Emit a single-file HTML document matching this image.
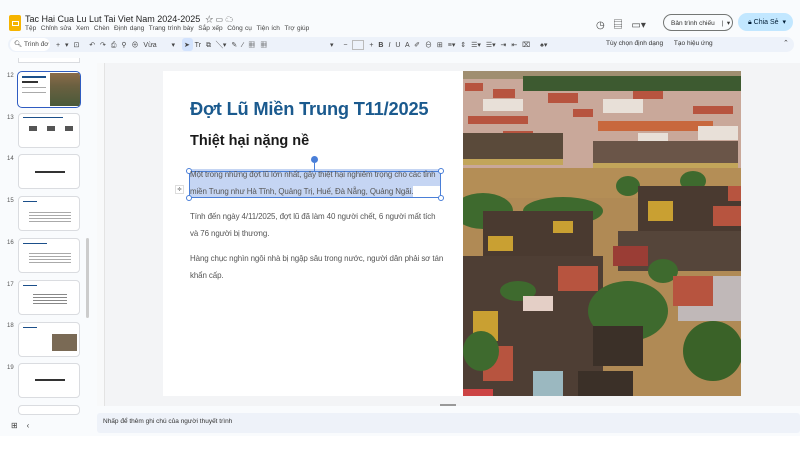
<!DOCTYPE html><html><head><meta charset="utf-8"><style>
*{margin:0;padding:0;box-sizing:border-box}
body{width:800px;height:450px;overflow:hidden;background:#f9fbfd;font-family:"Liberation Sans","Noto Sans CJK SC",sans-serif;position:relative;color:#1f1f1f}
.a{position:absolute}
.t{font-size:7px;color:#444;white-space:nowrap}
.thumb{position:absolute;left:18px;width:62px;height:35px;background:#fff;border:1px solid #dadce0;border-radius:4px}
.num{position:absolute;left:7px;font-size:6px;color:#555}
.body{font-family:"Liberation Sans",sans-serif;font-size:7.95px;color:#555;line-height:16.5px;white-space:nowrap;letter-spacing:-0.1px}
</style></head><body>
<div class="a" style="left:9px;top:15px;width:12px;height:16px;background:#f6b400;border-radius:2px"></div>
<div class="a" style="left:11.5px;top:21px;width:7px;height:5px;border:1.3px solid #fff"></div>
<div class="a" style="left:25px;top:14px;font-size:9px;color:#1f1f1f">Tac Hai Cua Lu Lut Tai Viet Nam 2024-2025 &nbsp;<span style="font-size:8px;color:#555">☆ ▭ ☁</span></div>
<div class="a t" style="left:25px;top:25px;font-size:6.5px;word-spacing:0.5px">Tệp &nbsp;Chỉnh sửa &nbsp;Xem &nbsp;Chèn &nbsp;Định dạng &nbsp;Trang trình bày &nbsp;Sắp xếp &nbsp;Công cụ &nbsp;Tiện ích &nbsp;Trợ giúp</div>
<div class="a" style="left:596px;top:16px;font-size:10px;color:#444">◷ &nbsp;&nbsp;▤ &nbsp;&nbsp;▭▾</div>
<div class="a" style="left:663px;top:14px;width:70px;height:17px;border:1px solid #747775;border-radius:9px;font-size:6.5px;color:#333;padding:4px 0 0 7px">Bản trình chiếu <span style="margin-left:5px">|&nbsp; ▾</span></div>
<div class="a" style="left:738px;top:13px;width:55px;height:18px;background:#c2e7ff;border-radius:9px;font-size:7px;color:#001d35;padding:5px 0 0 10px">🔒︎ Chia Sẻ &nbsp;▾</div>
<div class="a" style="left:8px;top:37px;width:786px;height:15px;background:#edf2fa;border-radius:8px"></div>
<div class="a" style="left:10px;top:38px;width:40px;height:13px;background:#fff;border-radius:7px;font-size:6.5px;color:#444;padding:2px 0 0 4px">🔍︎ Trình đơ</div>
<div class="a t" style="left:56px;top:40px;font-size:7px;color:#444;word-spacing:3px">+ ▾ ⊡ &nbsp;↶ ↷ ⎙ ⚲ ⊕ Vừa &nbsp;&nbsp;▾</div>
<div class="a" style="left:182px;top:38px;width:11px;height:13px;background:#d3e3fd;border-radius:3px"></div>
<div class="a t" style="left:184px;top:40px;color:#444;word-spacing:3px">➤ Tr ⧉ ╲▾ ✎ ∕ ▦ ▦</div>
<div class="a t" style="left:330px;top:40px;color:#444;word-spacing:3px">▾ &nbsp;− <span style="display:inline-block;width:12px;height:10px;border:1px solid #bbb;vertical-align:middle"></span> + <b>B</b> <i>I</i> U A ✐ ⊖ ⊞ ≡▾ ⇕ ☰▾ ☰▾ ⇥ ⇤ ⌧ &nbsp;♠▾</div>
<div class="a t" style="left:606px;top:40px;font-size:6.5px;color:#333">Tùy chọn định dạng &nbsp;&nbsp;&nbsp;&nbsp;&nbsp;Tạo hiệu ứng</div>
<div class="a t" style="left:783px;top:39px">⌃</div>
<div class="a" style="left:18px;top:58px;width:62px;height:5px;background:#fff;border:1px solid #dadce0;border-top:none"></div>
<div class="num" style="top:73px">12</div>
<div class="a" style="left:17px;top:71px;width:64px;height:37px;border:1.5px solid #2f5cc1;border-radius:5px;background:#fff;overflow:hidden">
<div class="a" style="left:4px;top:4px;width:24px;height:2px;background:#1b4f8a"></div><div class="a" style="left:4px;top:9px;width:16px;height:2px;background:#333"></div>
<div class="a" style="left:4px;top:15px;width:24px;height:1px;background:#aaa"></div><div class="a" style="left:4px;top:20px;width:24px;height:1px;background:#aaa"></div>
<div class="a" style="left:32px;top:1px;width:30px;height:33px;background:linear-gradient(#8a6b4a,#6a6040 40%,#4a5a3a)"></div></div>
<div class="num" style="top:115px">13</div><div class="thumb" style="top:113px"><div class="a" style="left:4px;top:3px;width:40px;height:1px;background:#1b4f8a"></div><div class="a" style="left:10px;top:12px;width:45px;height:5px;background:repeating-linear-gradient(90deg,#555 0 8px,transparent 8px 18px)"></div></div>
<div class="num" style="top:156px">14</div><div class="thumb" style="top:154px"><div class="a" style="left:16px;top:16px;width:30px;height:2px;background:#333"></div></div>
<div class="num" style="top:198px">15</div><div class="thumb" style="top:196px"><div class="a" style="left:4px;top:4px;width:14px;height:1px;background:#1b4f8a"></div><div class="a" style="left:10px;top:15px;width:42px;height:10px;background:repeating-linear-gradient(#aaa 0 1px,transparent 1px 3px)"></div></div>
<div class="num" style="top:240px">16</div><div class="thumb" style="top:238px"><div class="a" style="left:4px;top:4px;width:24px;height:1px;background:#1b4f8a"></div><div class="a" style="left:10px;top:14px;width:42px;height:10px;background:repeating-linear-gradient(#aaa 0 1px,transparent 1px 3px)"></div></div>
<div class="num" style="top:282px">17</div><div class="thumb" style="top:280px"><div class="a" style="left:4px;top:4px;width:14px;height:1px;background:#1b4f8a"></div><div class="a" style="left:14px;top:13px;width:34px;height:10px;background:repeating-linear-gradient(#888 0 1px,transparent 1px 3px)"></div></div>
<div class="num" style="top:323px">18</div><div class="thumb" style="top:322px"><div class="a" style="left:4px;top:4px;width:14px;height:1px;background:#1b4f8a"></div><div class="a" style="left:33px;top:11px;width:25px;height:17px;background:#7a6a55"></div></div>
<div class="num" style="top:365px">19</div><div class="thumb" style="top:363px"><div class="a" style="left:16px;top:15px;width:30px;height:2px;background:#333"></div></div>
<div class="thumb" style="top:405px;height:10px"></div>
<div class="a" style="left:86px;top:238px;width:3px;height:80px;background:#ccc;border-radius:2px"></div>
<div class="a" style="left:11px;top:421px;font-size:8px;color:#444">⊞ &nbsp;&nbsp;&nbsp;‹</div>
<div class="a" style="left:97px;top:63px;width:703px;height:343px;background:#f3f4f6"></div>
<div class="a" style="left:97px;top:63px;width:8px;height:343px;background:#f8f9fa;border-right:1px solid #e3e3e3"></div>
<div class="a" style="left:163px;top:71px;width:578px;height:325px;background:#fff"></div>
<div class="a" style="left:190px;top:98px;font-size:18.3px;font-weight:bold;color:#1b5a8e;letter-spacing:-0.2px;white-space:nowrap">Đợt Lũ Miền Trung T11/2025</div>
<div class="a" style="left:190px;top:133px;font-size:14.5px;font-weight:bold;color:#1a1a1a">Thiệt hại nặng nề</div>
<div class="a" style="left:189px;top:169px;width:252px;height:17px;background:#c5d5f3"></div>
<div class="a" style="left:189px;top:186px;width:224px;height:12px;background:#c5d5f3"></div>
<div class="a" style="left:189px;top:171px;width:252px;height:27px;border:1px solid #4a7fd8"></div>
<div class="a" style="left:314px;top:163px;width:1px;height:8px;background:#4a7fd8"></div>
<div class="a" style="left:311px;top:156px;width:7px;height:7px;border-radius:50%;background:#4a7fd8"></div>
<div class="a" style="left:186px;top:168px;width:6px;height:6px;border-radius:50%;background:#fff;border:1px solid #4a7fd8"></div>
<div class="a" style="left:438px;top:168px;width:6px;height:6px;border-radius:50%;background:#fff;border:1px solid #4a7fd8"></div>
<div class="a" style="left:186px;top:195px;width:6px;height:6px;border-radius:50%;background:#fff;border:1px solid #4a7fd8"></div>
<div class="a" style="left:438px;top:195px;width:6px;height:6px;border-radius:50%;background:#fff;border:1px solid #4a7fd8"></div>
<div class="a" style="left:175px;top:185px;width:9px;height:9px;background:#fff;border:1px solid #ddd;font-size:6px;text-align:center;color:#666">≑</div>
<div class="a body" style="left:190px;top:167px">Một trong những đợt lũ lớn nhất, gây thiệt hại nghiêm trọng cho các tỉnh<br>miền Trung như Hà Tĩnh, Quảng Trị, Huế, Đà Nẵng, Quảng Ngãi.</div>
<div class="a body" style="left:190px;top:209px">Tính đến ngày 4/11/2025, đợt lũ đã làm 40 người chết, 6 người mất tích<br>và 76 người bị thương.</div>
<div class="a body" style="left:190px;top:251px">Hàng chục nghìn ngôi nhà bị ngập sâu trong nước, người dân phải sơ tán<br>khẩn cấp.</div>
<svg class="a" style="left:463px;top:71px" width="278" height="325" viewBox="0 0 278 325">
<rect width="278" height="325" fill="#b08a55"/>
<rect width="278" height="8" fill="#a08e70"/>
<rect x="0" y="8" width="278" height="92" fill="#c9a89a"/>
<rect x="60" y="5" width="218" height="15" fill="#3d5a30"/>
<g fill="#b7543f"><rect x="2" y="12" width="18" height="8"/><rect x="30" y="18" width="22" height="9"/><rect x="85" y="22" width="30" height="10"/><rect x="170" y="20" width="30" height="8"/><rect x="135" y="50" width="115" height="10" fill="#c8683d"/><rect x="5" y="45" width="60" height="8"/><rect x="230" y="35" width="40" height="8"/><rect x="110" y="38" width="20" height="8"/><rect x="40" y="60" width="30" height="7"/><rect x="200" y="75" width="35" height="7"/></g>
<g fill="#e8e0d8"><rect x="20" y="28" width="40" height="12"/><rect x="140" y="28" width="40" height="14"/><rect x="235" y="55" width="40" height="14"/><rect x="175" y="62" width="30" height="10"/></g>
<rect x="0" y="62" width="100" height="32" fill="#5a4a3a"/><rect x="130" y="70" width="145" height="25" fill="#6a5548"/>
<rect x="0" y="88" width="100" height="6" fill="#c2a55a"/><rect x="130" y="92" width="145" height="5" fill="#c2a55a"/>
<rect x="0" y="97" width="278" height="30" fill="#b48e56"/>
<ellipse cx="20" cy="140" rx="30" ry="18" fill="#3e6a2e"/><ellipse cx="100" cy="140" rx="40" ry="14" fill="#3e6a2e"/>
<rect x="20" y="140" width="110" height="60" fill="#4a3a30"/>
<rect x="25" y="165" width="25" height="15" fill="#c9a032"/><rect x="90" y="150" width="20" height="12" fill="#c9a032"/>
<rect x="0" y="185" width="140" height="140" fill="#4e3e34"/>
<rect x="95" y="195" width="40" height="25" fill="#b7543f"/>
<ellipse cx="55" cy="220" rx="18" ry="10" fill="#3e6a2e"/>
<rect x="10" y="240" width="25" height="30" fill="#c9a032"/>
<rect x="60" y="225" width="30" height="15" fill="#e4cfc6"/>
<ellipse cx="165" cy="240" rx="40" ry="30" fill="#3e6a2e"/>
<rect x="20" y="275" width="30" height="35" fill="#b7543f"/><rect x="70" y="300" width="30" height="25" fill="#9bb8c0"/>
<rect x="130" y="255" width="50" height="40" fill="#3b3028"/><rect x="115" y="300" width="55" height="25" fill="#3b3028"/>
<ellipse cx="18" cy="280" rx="18" ry="20" fill="#3e6a2e"/>
<ellipse cx="165" cy="115" rx="12" ry="10" fill="#3e6a2e"/><ellipse cx="230" cy="110" rx="13" ry="10" fill="#3e6a2e"/>
<rect x="175" y="115" width="103" height="55" fill="#4a3a30"/><rect x="185" y="130" width="25" height="20" fill="#c9a032"/>
<rect x="250" y="135" width="28" height="20" fill="#b7543f"/><rect x="265" y="115" width="13" height="15" fill="#b7543f"/>
<rect x="155" y="160" width="123" height="40" fill="#55453a"/>
<ellipse cx="200" cy="200" rx="15" ry="12" fill="#3e6a2e"/>
<rect x="215" y="205" width="63" height="45" fill="#c0b8b8"/><rect x="210" y="205" width="40" height="30" fill="#b7543f"/>
<rect x="150" y="175" width="35" height="20" fill="#9a3d35"/>
<ellipse cx="250" cy="280" rx="30" ry="30" fill="#3a6228"/>
<rect x="0" y="318" width="30" height="7" fill="#c44"/>
</svg>
<div class="a" style="left:440px;top:404px;width:16px;height:2px;background:#999"></div>
<div class="a" style="left:97px;top:413px;width:703px;height:20px;background:#eef2f9;border-radius:3px"></div>
<div class="a t" style="left:103px;top:418px;font-size:6.5px;color:#333">Nhấp để thêm ghi chú của người thuyết trình</div>
<div class="a" style="left:0;top:436px;width:800px;height:14px;background:#fff"></div>
</body></html>
